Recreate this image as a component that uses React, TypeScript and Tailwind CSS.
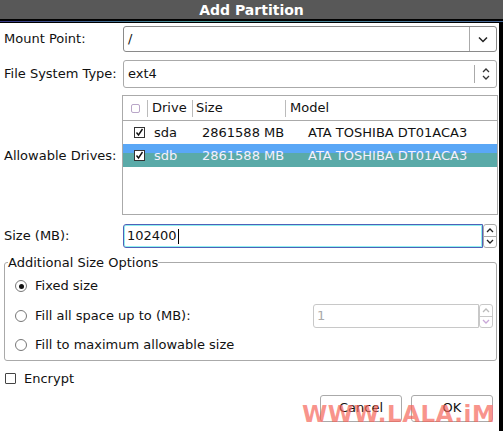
import React from 'react';

const font = { fontFamily: '"DejaVu Sans", Verdana, sans-serif' };

function ChevronDown() {
  return (
    <svg width="10" height="7" viewBox="0 0 10 7">
      <polyline points="1,1.5 5,5.5 9,1.5" fill="none" stroke="#222" strokeWidth="1.5" />
    </svg>
  );
}

function UpDown({ color = '#333' }: { color?: string }) {
  return (
    <svg width="8" height="14" viewBox="0 0 8 14">
      <polyline points="1,5 4,2 7,5" fill="none" stroke={color} strokeWidth="1.3" />
      <polyline points="1,9 4,12 7,9" fill="none" stroke={color} strokeWidth="1.3" />
    </svg>
  );
}

function Check({ checked }: { checked?: boolean }) {
  return (
    <span className="flex h-[11px] w-[11px] items-center justify-center border border-[#333] bg-white">
      {checked && (
        <svg width="9" height="9" viewBox="0 0 9 9">
          <polyline points="1.5,4.5 3.5,7 7.5,1" fill="none" stroke="#111" strokeWidth="1.4" />
        </svg>
      )}
    </span>
  );
}

function Radio({ on }: { on?: boolean }) {
  return (
    <span className="flex h-[12px] w-[12px] items-center justify-center rounded-full border border-[#777] bg-white">
      {on && <span className="h-[5px] w-[5px] rounded-full bg-[#111]" />}
    </span>
  );
}

function Spin({ disabled }: { disabled?: boolean }) {
  const c = disabled ? 'border-[#c8c8c8]' : 'border-[#aaa]';
  return (
    <div className={`flex w-[14px] flex-col rounded-[3px] border ${c} bg-white`}>
      <div className={`flex flex-1 items-center justify-center border-b ${c}`}>
        <svg width="8" height="5" viewBox="0 0 8 5">
          <polyline points="1,4 4,1 7,4" fill="none" stroke={disabled ? '#bbb' : '#222'} strokeWidth="1.3" />
        </svg>
      </div>
      <div className="flex flex-1 items-center justify-center">
        <svg width="8" height="5" viewBox="0 0 8 5">
          <polyline points="1,1 4,4 7,1" fill="none" stroke={disabled ? '#c9a8d8' : '#222'} strokeWidth="1.3" />
        </svg>
      </div>
    </div>
  );
}

const drives = [
  { name: 'sda', size: '2861588 MB', model: 'ATA TOSHIBA DT01ACA3', selected: false },
  { name: 'sdb', size: '2861588 MB', model: 'ATA TOSHIBA DT01ACA3', selected: true },
];

export default function App() {
  return (
    <div className="relative h-[431px] w-[503px] overflow-hidden bg-white text-[13px] text-[#111]" style={font}>
      {/* Title bar */}
      <div className="flex h-[19px] items-center justify-center bg-[#585858] text-[14px] font-bold leading-none text-white">
        Add Partition
      </div>
      <div className="flex h-[4px] flex-col justify-center bg-black">
        <div className="h-px bg-[linear-gradient(90deg,#3a3a8a,#4a9a9a_40%,#4a6a9a)]" />
      </div>

      <div className="flex h-[408px]">
        <div className="w-[499px]">
          {/* Form rows */}
          <div className="grid grid-cols-[119px_1fr] items-center gap-y-[8px] pl-[4px] pr-[2px] pt-[3px]">
            <span>Mount Point:</span>
            <div className="flex h-[26px] rounded-[3px] border border-[#8a8a8a]">
              <div className="flex flex-1 items-center pl-[4px]">/</div>
              <div className="flex w-[27px] items-center justify-center border-l border-[#aaa]">
                <ChevronDown />
              </div>
            </div>

            <span>File System Type:</span>
            <div className="flex h-[28px] items-center rounded-[3px] border border-[#aaa]">
              <div className="flex-1 pl-[4px]">ext4</div>
              <div className="flex h-[18px] w-[22px] items-center justify-center border-l border-[#aaa]">
                <UpDown />
              </div>
            </div>

            <span className="self-center">Allowable Drives:</span>
            <div className="-ml-px -mr-px mt-[-1px] h-[120px] border border-[#aaa] bg-white">
              <div className="flex h-[25px] items-center border-b border-[#aaa]">
                <div className="flex h-[17px] w-[25px] items-center justify-center border-r border-[#bbb]">
                  <span className="h-[9px] w-[9px] rounded-[2px] border border-[#b9a6c8]" />
                </div>
                <div className="flex h-[17px] w-[45px] items-center border-r border-[#bbb] pl-[4px]">Drive</div>
                <div className="flex h-[17px] w-[93px] items-center border-r border-[#bbb] pl-[3px]">Size</div>
                <div className="pl-[4px]">Model</div>
              </div>
              {drives.map((d) => (
                <div
                  key={d.name}
                  className={`flex h-[23px] items-center ${
                    d.selected ? 'bg-[linear-gradient(#5aa7f6_0_9px,#5aaaa8_9px)] text-[#f4f0ff]' : ''
                  }`}
                >
                  <div className="flex w-[30px] justify-center pl-[2px]">
                    <Check checked />
                  </div>
                  <div className="w-[49px] pl-[1px]">{d.name}</div>
                  <div className="w-[106px]">{d.size}</div>
                  <div>{d.model}</div>
                </div>
              ))}
            </div>

            <span className="mt-[1px]">Size (MB):</span>
            <div className="mt-[1px] flex h-[24px]">
              <div className="flex flex-1 items-center rounded-l-[3px] border border-[#5060b8] pl-[3px] shadow-[inset_0_0_0_1px_#8ff0f0]">
                102400<span className="ml-px h-[15px] w-px bg-black" />
              </div>
              <Spin />
            </div>
          </div>

          {/* Additional Size Options */}
          <fieldset className="mx-[4px] mr-[2px] mt-[7px] h-[106px] rounded-[3px] border border-[#aaa] px-[5px] pt-[4px]">
            <legend className="-ml-[2px] px-0 leading-[15px]">Additional Size Options</legend>
            <div className="flex h-[24px] items-center gap-[8px] pl-[5px]">
              <Radio on />
              <span>Fixed size</span>
            </div>
            <div className="flex h-[36px] items-center gap-[8px] pl-[5px]">
              <Radio />
              <span>Fill all space up to (MB):</span>
              <div className="ml-auto mr-[-2px] flex h-[24px] w-[180px]">
                <div className="flex flex-1 items-center rounded-l-[3px] border border-[#c8c8c8] pl-[3px] text-[#aaa]">
                  1
                </div>
                <Spin disabled />
              </div>
            </div>
            <div className="flex h-[22px] items-center gap-[8px] pl-[5px]">
              <Radio />
              <span>Fill to maximum allowable size</span>
            </div>
          </fieldset>

          {/* Encrypt */}
          <div className="mt-[8px] flex items-center gap-[8px] pl-[5px]">
            <span className="h-[11px] w-[11px] rounded-[1px] border border-[#444]" />
            <span>Encrypt</span>
          </div>

          {/* Buttons */}
          <div className="mt-[6px] flex justify-end gap-[9px] pr-[6px]">
            <button className="h-[27px] w-[82px] rounded-[3px] border border-[#aaa] bg-white">Cancel</button>
            <button className="h-[27px] w-[82px] rounded-[3px] border border-[#aaa] bg-white">OK</button>
          </div>
        </div>
        <div className="w-[4px] bg-black" />
      </div>

      {/* Watermark */}
      <div
        className="pointer-events-none absolute left-[302px] top-[403px] text-[23px] font-bold leading-none tracking-[0.5px] text-[rgba(246,100,88,0.7)]"
        style={{ fontFamily: '"DejaVu Sans", sans-serif' }}
      >
        WWW.LALA.iM
      </div>
    </div>
  );
}
